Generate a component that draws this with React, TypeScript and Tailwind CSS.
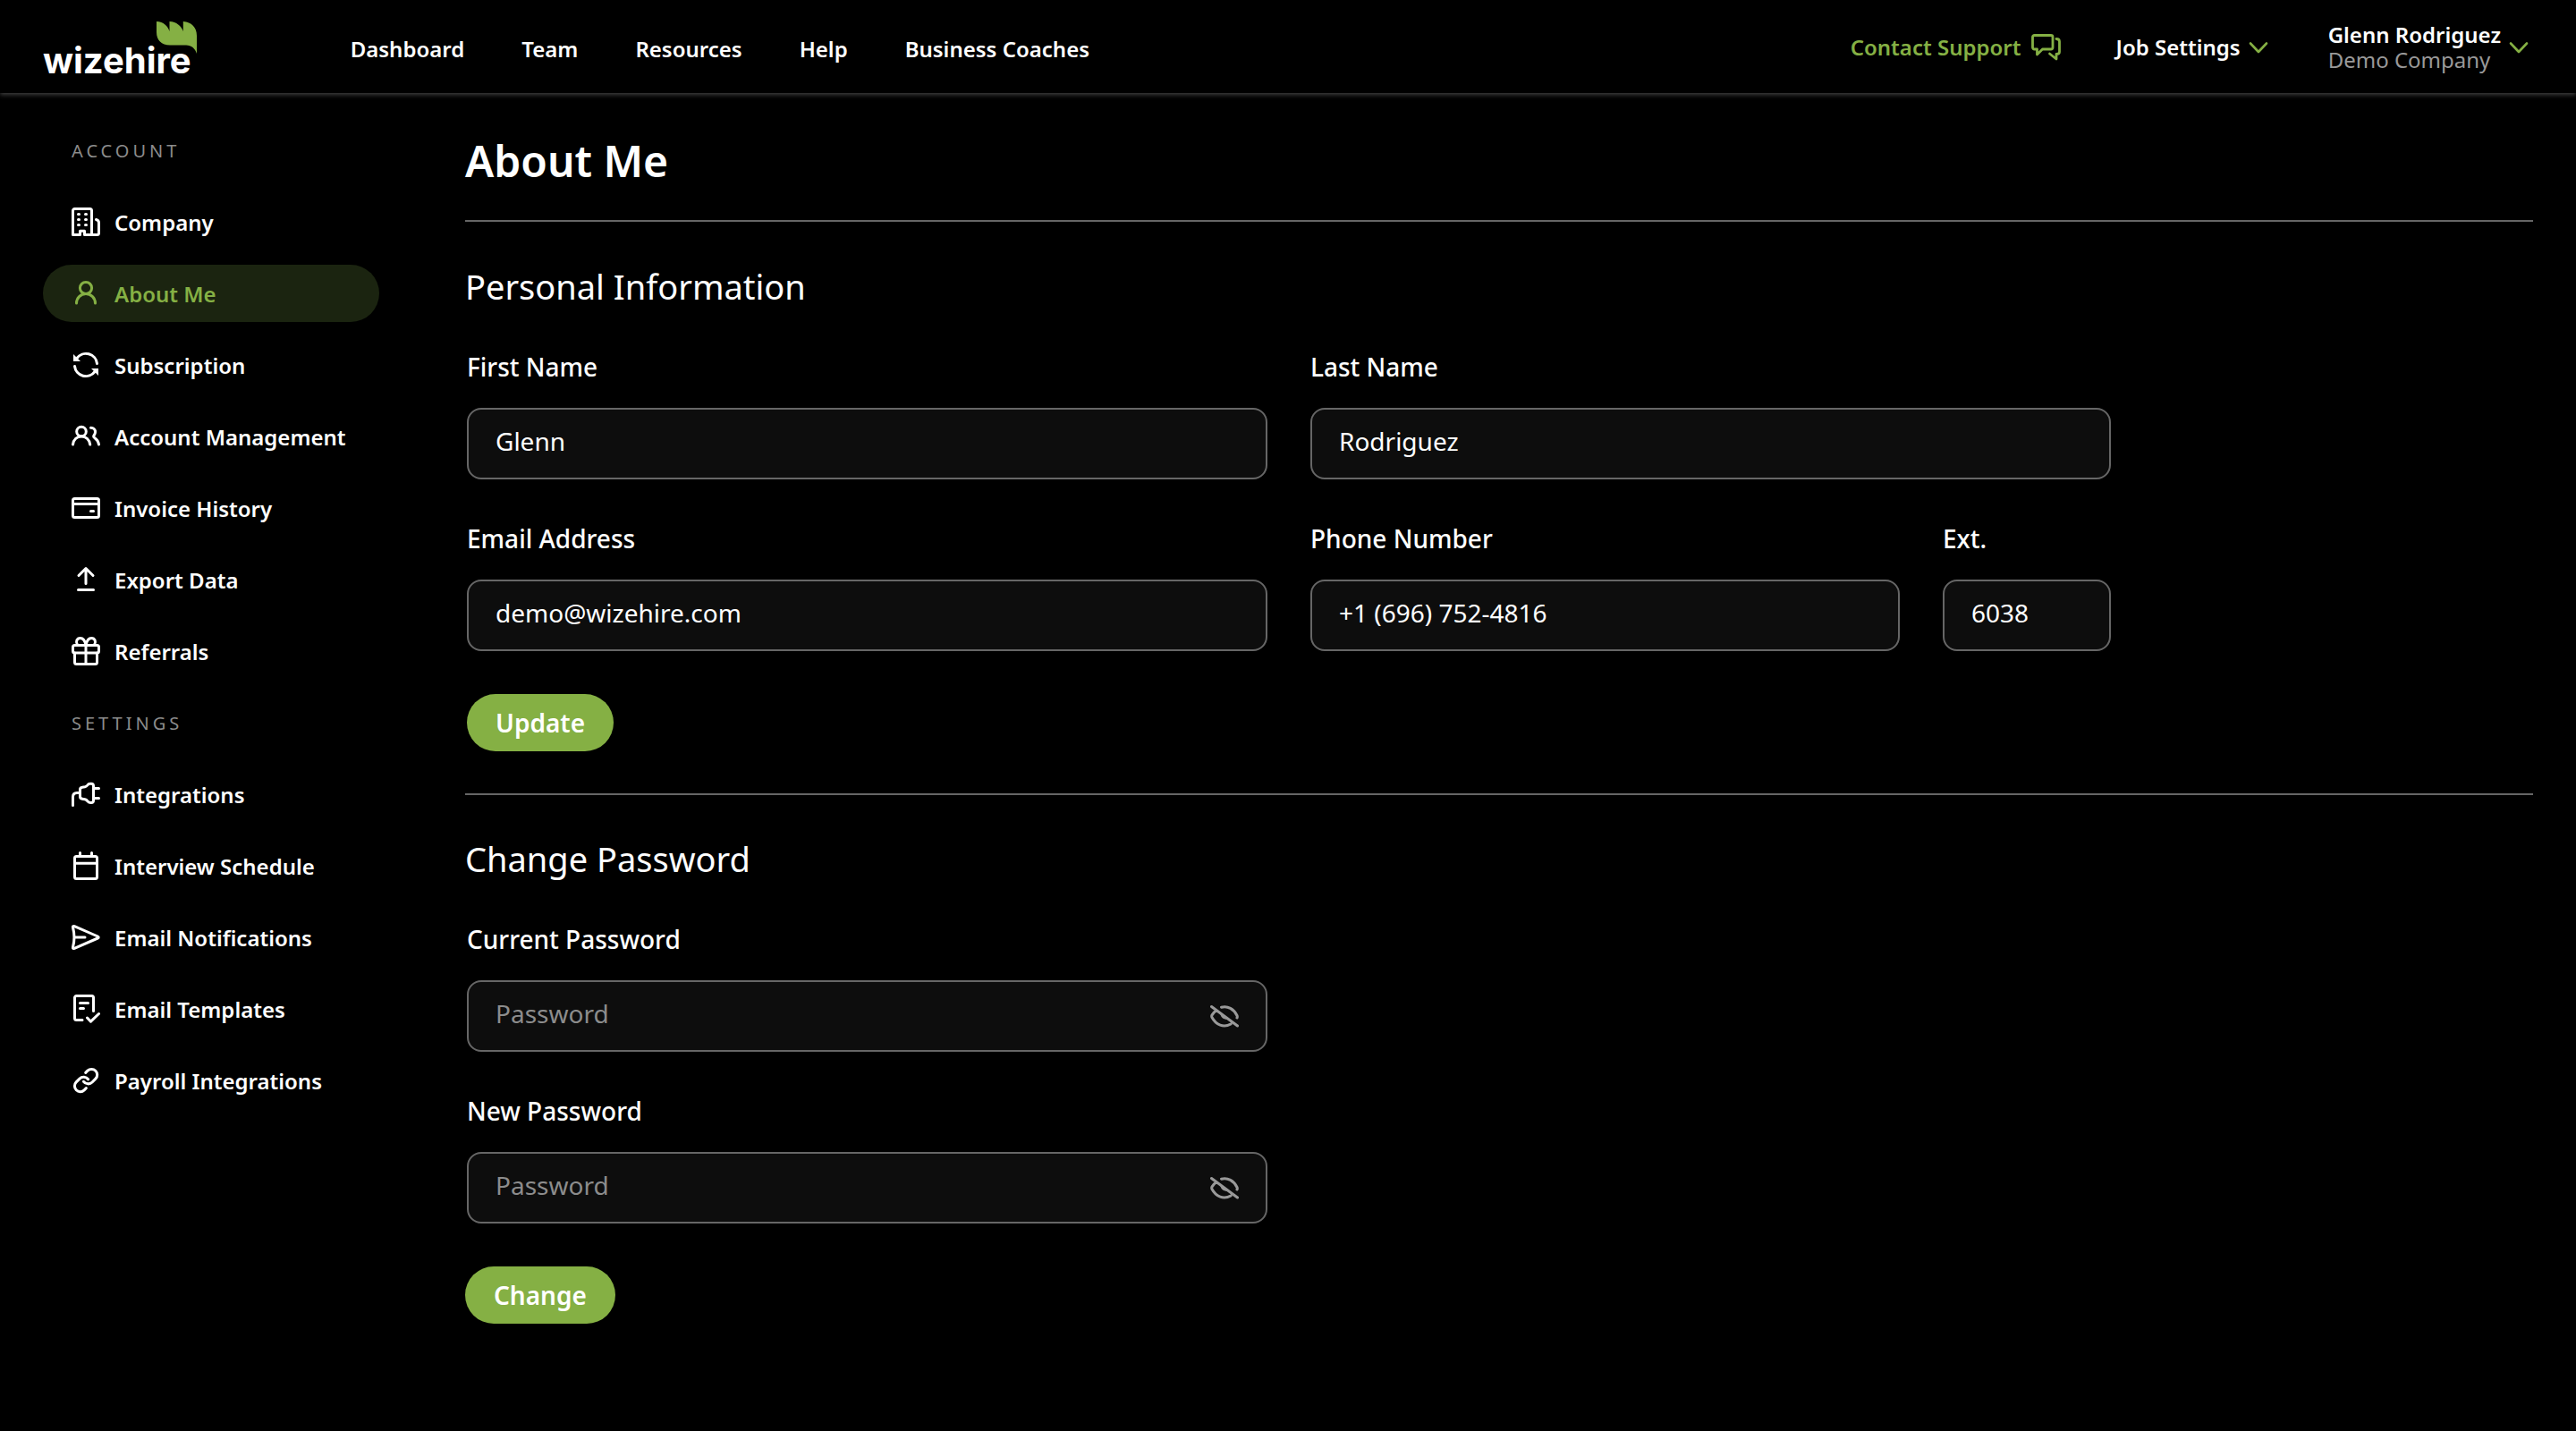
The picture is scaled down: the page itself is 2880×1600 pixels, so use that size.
import { useState } from 'react';
import type { ReactNode } from 'react';

function Icon({ children }: { children: ReactNode }) {
  return (
    <svg
      viewBox="0 0 32 32"
      className="size-8 shrink-0"
      fill="none"
      stroke="currentColor"
      strokeWidth="3"
      strokeLinecap="round"
      strokeLinejoin="round"
      aria-hidden="true"
    >
      {children}
    </svg>
  );
}

const icons: Record<string, ReactNode> = {
  company: (
    <>
      <path d="M22.5 30.5V3.5a2 2 0 0 0-2-2h-17a2 2 0 0 0-2 2v27h8v-4.2h5v4.2h14a2 2 0 0 0 2-2V17c0-1.8-1-3-3-3.5" />
      <path d="M7.5 7.5h1M15.500 7.500h1M7.500 13.500h1M15.500 13.500h1M7.500 19.500h1M15.500 19.500h1" />
    </>
  ),
  user: (
    <>
      <circle cx="16" cy="10" r="6.600" />
      <path d="M5.500 27a10.500 10.500 0 0 1 21 0" />
    </>
  ),
  refresh: (
    <>
      <path d="M28.500 14.500A12.500 12.500 0 0 0 6 8.500M3.500 17.500A12.500 12.500 0 0 0 26 23.500" />
      <path d="M2 4v8h8zM30 28v-8h-8z" fill="currentColor" stroke="none" />
    </>
  ),
  users: (
    <>
      <circle cx="11" cy="10.500" r="5.300" />
      <path d="M1.500 25c.8-5.500 4.500-9 9.500-9s8.800 3.500 9.700 9" />
      <path d="M21.500 6.200c3 0 5 2 5 4.800 0 2.200-1.200 3.200-1.800 4.600-.3.900.2 1.400 1.300 2.200 2.500 1.800 4 4 4.500 7.200" />
    </>
  ),
  card: (
    <>
      <rect x="1.500" y="5.500" width="29" height="21" rx="2" />
      <path d="M1.500 11.500h29M21.500 19.500h3" />
    </>
  ),
  exportData: <path d="M16 20.500v-17M8 11.500l8-8 8 8M7.500 27.500h17" />,
  gift: (
    <>
      <rect x="1.500" y="9.500" width="29" height="8.500" rx="2" />
      <path d="M3.500 18v10.500a2 2 0 0 0 2 2h21a2 2 0 0 0 2-2V18M16 9.500v21" />
      <path d="M16 9.500C15 4 12.500 1.500 9.700 1.500 6 1.500 4.200 5.500 6.500 9M16 9.500c1-5.500 3.500-8 6.300-8 3.700 0 5.500 4 3.200 7.500" />
    </>
  ),
  plug: (
    <>
      <path d="M1.500 28.500V19c0-3 1.500-4.500 4.500-4.500h3.500" />
      <path d="M9.500 18.600V11c0-1.500 1-2.500 2.500-2.700l3-.5c1.500-.3 2-.8 2.700-1.800.8-1.200 1.800-1.800 3.300-1.800h1c1.500 0 2.500 1 2.500 2.500v16.200c0 1.500-1 2.500-2.500 2.500h-1c-1.500 0-2.500-.6-3.300-1.800-.7-1-1.200-1.500-2.700-1.800l-3-.5c-1.500-.2-2.500-1.200-2.500-2.700zM24.500 9.500h6M24.500 20.500h6" />
    </>
  ),
  calendar: (
    <>
      <rect x="3.500" y="5.500" width="25" height="25" rx="2" />
      <path d="M3.500 13.200h25M9.500 1.500v4M22.500 1.500v4" />
    </>
  ),
  send: (
    <path d="M4 16h11M3.200 3.600 29.300 15c1.200.5 1.200 1.500 0 2L3.200 28.400c-1.200.5-2-.2-1.700-1.400 2-7.500 2-14.500 0-22-.3-1.200.5-1.900 1.700-1.400z" />
  ),
  template: (
    <path d="M12 28.500H5.500a2 2 0 0 1-2-2v-23a2 2 0 0 1 2-2h17a2 2 0 0 1 2 2v15M9.500 9.500h9M9.500 15.500h4M17.500 26l4 4.200 9-8.700" />
  ),
  link: (
    <g transform="translate(0.8 0.8) scale(1.27)" strokeWidth="2.400">
      <path d="M10 13a5 5 0 0 0 7.540.540l3-3a5 5 0 0 0-7.070-7.070l-1.720 1.710M14 11a5 5 0 0 0-7.540-.540l-3 3a5 5 0 0 0 7.070 7.070l1.710-1.710" />
    </g>
  ),
};

const groups = [
  {
    title: 'ACCOUNT',
    items: [
      ['Company', 'company'],
      ['About Me', 'user'],
      ['Subscription', 'refresh'],
      ['Account Management', 'users'],
      ['Invoice History', 'card'],
      ['Export Data', 'exportData'],
      ['Referrals', 'gift'],
    ],
  },
  {
    title: 'SETTINGS',
    items: [
      ['Integrations', 'plug'],
      ['Interview Schedule', 'calendar'],
      ['Email Notifications', 'send'],
      ['Email Templates', 'template'],
      ['Payroll Integrations', 'link'],
    ],
  },
];

function Chevron() {
  return (
    <svg viewBox="0 0 24 24" className="size-6 shrink-0 text-[#85b044]" fill="none" stroke="currentColor" strokeWidth="2.600" strokeLinecap="round" strokeLinejoin="round" aria-hidden="true">
      <path d="M3 7.500l9 9.500 9-9.500" />
    </svg>
  );
}

function Logo() {
  return (
    <a href="#" aria-label="wizehire" className="relative block pt-8 font-['Inter',sans-serif] text-[40px] leading-12 font-bold text-white">
      wizehire
      <svg viewBox="0 0 45 36" className="absolute top-3 -right-1.5 h-9 w-[45px] text-[#85b044]" fill="currentColor" aria-hidden="true">
        <path d="M0 0c8 .5 12.500 5 14.500 11V0C22.500.5 27.500 5 29.800 11V0C39 .5 45 6.500 45 16v20c-2-6-6-9.600-12-9.600H15C5.500 26.400 0 21 0 12z" />
      </svg>
    </a>
  );
}

function Header() {
  return (
    <header className="flex h-[104px] items-center bg-black pr-[52px] pl-12 text-2xl leading-7 font-semibold shadow-[0_2px_5px_rgba(255,255,255,0.25)]">
      <Logo />
      <nav aria-label="Main" className="ml-[178px] flex gap-16 pt-1.5">
        {['Dashboard', 'Team', 'Resources', 'Help', 'Business Coaches'].map((item) => (
          <a key={item} href="#">{item}</a>
        ))}
      </nav>
      <div className="ml-auto flex items-center pt-0.5">
        <a href="#" className="flex items-center gap-3 text-[#85b044]">
          Contact Support
          <svg viewBox="0 0 34 30" className="h-[30px] w-[34px]" fill="none" stroke="currentColor" strokeWidth="2.800" strokeLinecap="round" strokeLinejoin="round" aria-hidden="true">
            <path d="M3.500 1.500h18.500a2 2 0 0 1 2 2v11.500a2 2 0 0 1-2 2h-9.500L6.500 23v-6h-3a2 2 0 0 1-2-2V3.500a2 2 0 0 1 2-2z" />
            <path d="M28 5.500c2.500 0 3.500 1 3.500 3v11.500c0 1.500-1 2.500-3.500 2.500v5.500l-7.500-6" />
          </svg>
        </a>
        <button type="button" className="ml-[60px] flex items-center gap-2">
          Job Settings
          <Chevron />
        </button>
        <button type="button" className="ml-[66px] flex items-center gap-2 text-left">
          <span className="flex flex-col">
            <span>Glenn Rodriguez</span>
            <span className="font-normal text-[#999]">Demo Company</span>
          </span>
          <Chevron />
        </button>
      </div>
    </header>
  );
}

function Sidebar() {
  return (
    <nav aria-label="Settings" className="flex w-[376px] shrink-0 flex-col gap-4 pt-8">
      {groups.map((group) => (
        <section key={group.title} className="flex flex-col gap-4">
          <h2 className="flex h-16 items-center px-8 pt-0.5 text-xl tracking-[4px] text-[#8c8c8c]">{group.title}</h2>
          <ul className="flex flex-col gap-4">
            {group.items.map(([label, icon]) => (
              <li key={label}>
                <a
                  href="#"
                  aria-current={label === 'About Me' ? 'page' : undefined}
                  className="flex h-16 items-center gap-4 rounded-full px-8 text-2xl font-semibold whitespace-nowrap aria-[current=page]:bg-[#1b2410] aria-[current=page]:text-[#85b044]"
                >
                  <Icon>{icons[icon]}</Icon>
                  <span className="pt-0.5">{label}</span>
                </a>
              </li>
            ))}
          </ul>
        </section>
      ))}
    </nav>
  );
}

const inputClass =
  'h-20 w-full min-w-0 rounded-2xl border-2 border-[#666] bg-[#0d0d0d] px-[30px] pb-1.5 text-[28px] text-white outline-none placeholder:text-[#8c8c8c]';

function Field({ id, label, value, type = 'text' }: { id: string; label: string; value: string; type?: string }) {
  return (
    <div className="flex min-w-0 flex-col gap-7">
      <label htmlFor={id} className="text-[28px] leading-9 font-medium">{label}</label>
      <input id={id} type={type} defaultValue={value} className={inputClass} />
    </div>
  );
}

function PasswordField({ id, label }: { id: string; label: string }) {
  const [visible, setVisible] = useState(false);
  return (
    <div className="flex min-w-0 flex-col gap-7">
      <label htmlFor={id} className="text-[28px] leading-9 font-medium">{label}</label>
      <div className="relative">
        <input id={id} type={visible ? 'text' : 'password'} placeholder="Password" className={inputClass} />
        <button type="button" aria-label="Show password" onClick={() => setVisible(!visible)} className="absolute inset-y-0 right-8 my-auto size-8 text-[#999]">
          <Icon>
            <path d="M1.500 5.500l29 21.500M12.500 6.200c7-2 14 2 17.500 9.300.5 1 .5 1.500 0 2.500M6.500 10c-2 1.500-3.500 3-4.500 5-.5 1-.5 1.500 0 2.500C6.500 26 15 29.500 23 25" />
            <path d="M11.500 12.500c-.5 4.500 3 7.500 8 7.300z" fill="currentColor" stroke="none" />
          </Icon>
        </button>
      </div>
    </div>
  );
}

function Submit({ children }: { children: ReactNode }) {
  return (
    <button type="submit" className="mt-12 h-16 rounded-full bg-[#85b044] px-8 text-[28px] font-semibold text-white">
      {children}
    </button>
  );
}

export default function App() {
  return (
    <div className="min-h-screen bg-black font-['Noto_Sans',sans-serif] text-white">
      <Header />
      <div className="flex gap-24 px-12">
        <Sidebar />
        <main className="min-w-0 flex-1 pt-[42px]">
          <h1 className="text-[48px] leading-[68px] font-semibold">About Me</h1>
          <hr className="mt-8 mb-12 border-t-2 border-[#666]" />
          <form onSubmit={(e) => e.preventDefault()}>
            <h2 className="mb-12 text-[38px] leading-12">Personal Information</h2>
            <div className="ml-0.5">
              <div className="grid max-w-[1838px] grid-cols-2 gap-12">
                <Field id="first" label="First Name" value="Glenn" />
                <Field id="last" label="Last Name" value="Rodriguez" />
                <Field id="email" label="Email Address" value="demo@wizehire.com" type="email" />
                <div className="grid grid-cols-[1fr_188px] gap-12">
                  <Field id="phone" label="Phone Number" value="+1 (696) 752-4816" type="tel" />
                  <Field id="ext" label="Ext." value="6038" />
                </div>
              </div>
              <Submit>Update</Submit>
            </div>
          </form>
          <hr className="my-[47px] border-t-2 border-[#666]" />
          <form onSubmit={(e) => e.preventDefault()}>
            <h2 className="mb-12 text-[38px] leading-12">Change Password</h2>
            <div className="ml-0.5 grid max-w-[895px] gap-12">
              <PasswordField id="current" label="Current Password" />
              <PasswordField id="new" label="New Password" />
            </div>
            <Submit>Change</Submit>
          </form>
        </main>
      </div>
    </div>
  );
}
